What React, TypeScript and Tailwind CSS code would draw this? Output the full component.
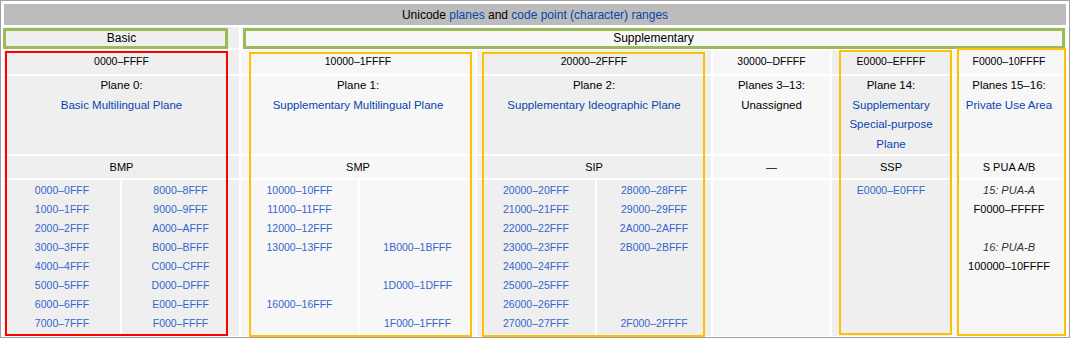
import React from "react"

const LINK = "text-[#0645ad]"
const RANGE = "text-[#3366cc]"

// one range cell: a column of lines, blank strings keep the row slot
function Ranges({ items, bg }: { items: string[]; bg: string }) {
  return (
    <div className={`${bg} pt-px text-center text-[10.5px] leading-[19px] ${RANGE}`}>
      {items.map((t, i) => (
        <div key={i} className="h-[19px]">{t}</div>
      ))}
    </div>
  )
}

const Frame = ({ cls }: { cls: string }) => <div className={`absolute pointer-events-none ${cls}`} />

export default function App() {
  const dark = "bg-[#efefef]"
  const light = "bg-[#f7f7f7]"
  const cell = "flex items-center justify-center text-center"
  const code = "text-[10.5px]"
  const name = "text-center text-[11.5px] leading-[19.5px]"

  return (
    <div className="bg-white w-[1072px] h-[341px]" style={{ fontFamily: '"Liberation Sans", Arial, sans-serif' }}>
      <div className="relative w-[1070px] h-[338px] border border-[#a0a0a0] pt-[3px] pl-[3px] pr-[2px] pb-px text-[11px] text-black">
        <div className="grid grid-cols-[116px_117px_117px_115px_118px_114px_117px_118px_114px] grid-rows-[21px_21px_24px_78px_22px_156px] gap-[2px]">
          {/* title */}
          <div className={`col-span-9 bg-[#bcbcbc] text-[12px] ${cell}`}>
            <span>
              Unicode <span className={LINK}>planes</span> and <span className={LINK}>code point (character) ranges</span>
            </span>
          </div>

          {/* groups */}
          <div className={`col-span-2 ${dark} ${cell} text-[12px]`}>Basic</div>
          <div className={`col-span-7 ${light} ${cell} text-[12px]`}>Supplementary</div>

          {/* ranges header */}
          <div className={`col-span-2 ${dark} ${cell} ${code}`}>0000–FFFF</div>
          <div className={`col-span-2 ${light} ${cell} ${code}`}>10000–1FFFF</div>
          <div className={`col-span-2 ${dark} ${cell} ${code}`}>20000–2FFFF</div>
          <div className={`${light} ${cell} ${code}`}>30000–DFFFF</div>
          <div className={`${dark} ${cell} ${code}`}>E0000–EFFFF</div>
          <div className={`${light} ${cell} ${code}`}>F0000–10FFFF</div>

          {/* plane names */}
          <div className={`col-span-2 ${dark} ${name}`}>
            <div>Plane 0:</div>
            <div className={LINK}>Basic Multilingual Plane</div>
          </div>
          <div className={`col-span-2 ${light} ${name}`}>
            <div>Plane 1:</div>
            <div className={LINK}>Supplementary Multilingual Plane</div>
          </div>
          <div className={`col-span-2 ${dark} ${name}`}>
            <div>Plane 2:</div>
            <div className={LINK}>Supplementary Ideographic Plane</div>
          </div>
          <div className={`${light} ${name}`}>
            <div>Planes 3–13:</div>
            <div>Unassigned</div>
          </div>
          <div className={`${dark} ${name}`}>
            <div>Plane 14:</div>
            <div className={LINK}>Supplementary</div>
            <div className={LINK}>Special-purpose</div>
            <div className={LINK}>Plane</div>
          </div>
          <div className={`${light} ${name}`}>
            <div>Planes 15–16:</div>
            <div className={LINK}>Private Use Area</div>
          </div>

          {/* abbreviations */}
          <div className={`col-span-2 ${dark} ${cell}`}>BMP</div>
          <div className={`col-span-2 ${light} ${cell}`}>SMP</div>
          <div className={`col-span-2 ${dark} ${cell}`}>SIP</div>
          <div className={`${light} ${cell}`}>—</div>
          <div className={`${dark} ${cell}`}>SSP</div>
          <div className={`${light} ${cell}`}>S PUA A/B</div>

          {/* code point ranges */}
          <Ranges bg={dark} items={["0000–0FFF", "1000–1FFF", "2000–2FFF", "3000–3FFF", "4000–4FFF", "5000–5FFF", "6000–6FFF", "7000–7FFF"]} />
          <Ranges bg={dark} items={["8000–8FFF", "9000–9FFF", "A000–AFFF", "B000–BFFF", "C000–CFFF", "D000–DFFF", "E000–EFFF", "F000–FFFF"]} />
          <Ranges bg={light} items={["10000–10FFF", "11000–11FFF", "12000–12FFF", "13000–13FFF", "", "", "16000–16FFF", ""]} />
          <Ranges bg={light} items={["", "", "", "1B000–1BFFF", "", "1D000–1DFFF", "", "1F000–1FFFF"]} />
          <Ranges bg={dark} items={["20000–20FFF", "21000–21FFF", "22000–22FFF", "23000–23FFF", "24000–24FFF", "25000–25FFF", "26000–26FFF", "27000–27FFF"]} />
          <Ranges bg={dark} items={["28000–28FFF", "29000–29FFF", "2A000–2AFFF", "2B000–2BFFF", "", "", "", "2F000–2FFFF"]} />
          <div className={light} />
          <Ranges bg={dark} items={["E0000–E0FFF"]} />
          <div className={`${light} pt-px text-center leading-[19px]`}>
            <div className="italic text-[#333]">15: PUA-A</div>
            <div>F0000–FFFFF</div>
            <div className="h-[19px]" />
            <div className="italic text-[#333]">16: PUA-B</div>
            <div>100000–10FFFF</div>
          </div>
        </div>

        {/* highlight frames drawn over the table */}
        <Frame cls="left-[2px] top-[27px] w-[225px] h-[21px] border-[3px] border-[#9bbb59]" />
        <Frame cls="left-[242px] top-[27px] w-[822px] h-[21px] border-[3px] border-[#9bbb59]" />
        <Frame cls="left-[4px] top-[50px] w-[223px] h-[285px] border-2 border-[#ff0000]" />
        <Frame cls="left-[248px] top-[51px] w-[223px] h-[285px] border-2 border-[#ffc000]" />
        <Frame cls="left-[481px] top-[51px] w-[223px] h-[285px] border-2 border-[#ffc000]" />
        <Frame cls="left-[838px] top-[49px] w-[113px] h-[285px] border-2 border-[#ffc000]" />
        <Frame cls="left-[956px] top-[47px] w-[109px] h-[288px] border-2 border-[#ffc000]" />
      </div>
    </div>
  )
}
